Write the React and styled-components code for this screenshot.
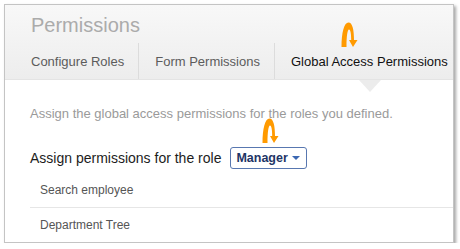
import React from "react";
import styled, { createGlobalStyle } from "styled-components";

const GlobalStyle = createGlobalStyle`
  body {
    margin: 0;
    background: #ffffff;
    font-family: "Liberation Sans", Arial, sans-serif;
  }
`;

const Frame = styled.div`
  position: relative;
  margin: 4px 0 0 4px;
  width: 450px;
  height: 239px;
  box-sizing: border-box;
  border: 1px solid #c4c4c4;
  background: #fff;
  box-shadow: 2px 2px 3px rgba(0, 0, 0, 0.35);
  overflow: hidden;
`;

const Header = styled.div`
  background: linear-gradient(#f8f8f8, #ededed);
  border-bottom: 1px solid #e4e4e4;
  padding-left: 26px;
`;

const Title = styled.h1`
  margin: 0;
  height: 38px;
  padding-top: 9px;
  box-sizing: border-box;
  font-size: 20px;
  font-weight: normal;
  color: #ababab;
`;

const Tabs = styled.div`
  display: flex;
  height: 36px;
`;

const Tab = styled.div`
  position: relative;
  display: flex;
  align-items: center;
  white-space: nowrap;
  padding-right: 14px;
  padding-left: ${(p) => (p.$first ? "0" : "16px")};
  font-size: 13px;
  color: ${(p) => (p.$active ? "#111" : "#5c5c5c")};
  border-left: ${(p) => (p.$first ? "none" : "1px solid #dcdcdc")};

  ${(p) =>
    p.$active &&
    `
    &::after {
      content: "";
      position: absolute;
      left: 84px;
      bottom: -13px;
      border-left: 11px solid transparent;
      border-right: 11px solid transparent;
      border-top: 12px solid #ececec;
    }
  `}
`;

const Body = styled.div`
  padding: 26px 0 0 25px;
`;

const Description = styled.p`
  margin: 0;
  font-size: 13px;
  color: #9a9a9a;
`;

const RoleLine = styled.div`
  display: flex;
  align-items: center;
  gap: 9px;
  margin-top: 26px;
  font-size: 14px;
  color: #1c1c1c;
`;

const RoleSelect = styled.div`
  display: flex;
  align-items: center;
  gap: 4px;
  height: 22px;
  box-sizing: border-box;
  padding: 0 6px 0 5px;
  border: 1px solid #5877b0;
  border-radius: 3px;
  font-size: 12.5px;
  font-weight: bold;
  color: #1e3566;
`;

const Caret = styled.span`
  width: 0;
  height: 0;
  border-left: 4px solid transparent;
  border-right: 4px solid transparent;
  border-top: 4px solid #3b67b2;
`;

const Rows = styled.div`
  margin-top: 4px;
`;

const Row = styled.div`
  height: 34px;
  display: flex;
  align-items: center;
  padding-left: 10px;
  border-bottom: 1px solid #e6e6e6;
  font-size: 12px;
  color: #555;
`;

const Marker = styled.svg`
  position: absolute;
  left: ${(p) => p.$x}px;
  top: ${(p) => p.$y}px;
`;

function ArrowMark({ x, y }) {
  return (
    <Marker $x={x} $y={y} width="17" height="26" viewBox="0 0 17 26">
      <path
        d="M0.5 25 C0.5 11 3 0.5 7.5 0.5 C11.5 0.5 13 8 13 18 L16.5 18 L12 25 L8 18 L10.2 18 C10.2 12 9.5 7.5 8 7.5 C6.5 7.5 5.5 14 5.5 25 Z"
        fill="#ff9a00"
      />
    </Marker>
  );
}

export default function App() {
  return (
    <>
      <GlobalStyle />
      <Frame>
        <Header>
          <Title>Permissions</Title>
          <Tabs>
            <Tab $first>Configure Roles</Tab>
            <Tab>Form Permissions</Tab>
            <Tab $active>Global Access Permissions</Tab>
          </Tabs>
        </Header>
        <Body>
          <Description>
            Assign the global access permissions for the roles you defined.
          </Description>
          <RoleLine>
            Assign permissions for the role
            <RoleSelect>
              Manager
              <Caret />
            </RoleSelect>
          </RoleLine>
          <Rows>
            <Row>Search employee</Row>
            <Row>Department Tree</Row>
          </Rows>
        </Body>
        <ArrowMark x={336} y={17} />
        <ArrowMark x={257} y={113} />
      </Frame>
    </>
  );
}
